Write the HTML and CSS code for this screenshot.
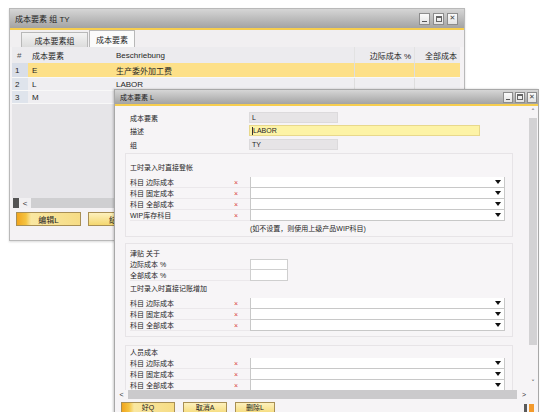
FILE: index.html
```html
<!DOCTYPE html>
<html lang="zh">
<head>
<meta charset="utf-8">
<link rel="stylesheet" href="styles.css">
</head>
<body>
<div class="desk">
  <div class="win win1">
    <div class="title t1">
      <span class="ttext">成本要素 组 TY</span>
      <div class="wbtns">
        <span class="wb"><i class="g-min"></i></span>
        <span class="wb"><i class="g-max"></i></span>
        <span class="wb"><i class="g-x">✕</i></span>
      </div>
    </div>
    <div class="tabs">
      <span class="tab">成本要素组</span>
      <span class="tab active">成本要素</span>
    </div>
    <div class="grid">
      <div class="grow head">
        <span class="c0">#</span><span class="c1">成本要素</span><span class="c2">Beschriebung</span><span class="c3">边际成本 %</span><span class="c4">全部成本</span>
      </div>
      <div class="grow r sel">
        <span class="c0">1</span><span class="c1">E</span><span class="c2">生产委外加工费</span><span class="c3"></span><span class="c4"></span>
      </div>
      <div class="grow r">
        <span class="c0">2</span><span class="c1">L</span><span class="c2">LABOR</span><span class="c3"></span><span class="c4"></span>
      </div>
      <div class="grow r">
        <span class="c0">3</span><span class="c1">M</span><span class="c2"></span><span class="c3"></span><span class="c4"></span>
      </div>
      <div class="gempty"></div>
      <div class="hs1"><span class="hthumb"></span><span class="harrow">&lt;</span><span class="htrack"></span></div>
    </div>
    <div class="btnrow1">
      <span class="btn b-edit">编辑L</span>
      <span class="btn b-2">结</span>
    </div>
  </div>

  <div class="win win2">
    <div class="title t2">
      <span class="ttext">成本要素 L</span>
      <div class="wbtns">
        <span class="wb"><i class="g-min"></i></span>
        <span class="wb"><i class="g-max"></i></span>
        <span class="wb"><i class="g-x">✕</i></span>
      </div>
    </div>
    <div class="body2">
      <div class="content">
        <div class="frow f1"><span class="flabel">成本要素</span><span class="fld gray short">L</span></div>
        <div class="frow f2"><span class="flabel">描述</span><span class="fld yellow long"><span class="caret"></span>LABOR</span></div>
        <div class="frow f3"><span class="flabel">组</span><span class="fld gray short">TY</span></div>

        <div class="sect s1">
          <div class="shead">工时录入时直接登帐</div>
          <div class="drow"><span class="dl">科目 边际成本</span><span class="x">×</span><span class="dd"></span></div>
          <div class="drow"><span class="dl">科目 固定成本</span><span class="x">×</span><span class="dd"></span></div>
          <div class="drow"><span class="dl">科目 全部成本</span><span class="x">×</span><span class="dd"></span></div>
          <div class="drow"><span class="dl">WIP库存科目</span><span class="x">×</span><span class="dd"></span></div>
          <div class="note">(如不设置，则使用上级产品WIP科目)</div>
        </div>

        <div class="sect s2">
          <div class="shead">津贴 关于</div>
          <div class="prow"><span class="dl">边际成本 %</span><span class="pin"></span></div>
          <div class="prow"><span class="dl">全部成本 %</span><span class="pin"></span></div>
          <div class="shead sh2">工时录入时直接记账增加</div>
          <div class="drow"><span class="dl">科目 边际成本</span><span class="x">×</span><span class="dd"></span></div>
          <div class="drow"><span class="dl">科目 固定成本</span><span class="x">×</span><span class="dd"></span></div>
          <div class="drow"><span class="dl">科目 全部成本</span><span class="x">×</span><span class="dd"></span></div>
        </div>

        <div class="sect s3">
          <div class="shead">人员成本</div>
          <div class="drow"><span class="dl">科目 边际成本</span><span class="x">×</span><span class="dd"></span></div>
          <div class="drow"><span class="dl">科目 固定成本</span><span class="x">×</span><span class="dd"></span></div>
          <div class="drow"><span class="dl">科目 全部成本</span><span class="x">×</span><span class="dd"></span></div>
        </div>
      </div>
      <div class="vs">
        <span class="vup">˄</span>
        <span class="vthumb"></span>
        <span class="vdown">˅</span>
      </div>
    </div>
    <div class="hs2"><span class="harrow2">&lt;</span><span class="htrack2"></span><span class="harrow2 r">&gt;</span></div>
    <div class="btnrow2">
      <span class="btn b-ok">好Q</span>
      <span class="btn b-cancel">取消A</span>
      <span class="btn b-del">删除L</span>
      <span class="grip"></span>
    </div>
  </div>
</div>
</body>
</html>
```

FILE: styles.css
```css
* { box-sizing: border-box; }
html, body { margin: 0; padding: 0; }
body {
  width: 549px; height: 412px; overflow: hidden; background: #ffffff;
  font-family: "Liberation Sans", "Noto Sans CJK SC", sans-serif;
  color: #262626;
}
.desk { position: relative; width: 549px; height: 412px; }

.win { position: absolute; background: #f4f2f4; border: 1px solid #b9b9b9; }
.win1 { left: 9px; top: 8px; width: 456px; height: 233px; box-shadow: 0 1px 2px rgba(0,0,0,0.15); font-size: 8px; }
.win2 { left: 114px; top: 89px; width: 425px; height: 330px; font-size: 7px; background: #f6f4f6; border-color: #a8a8a8; box-shadow: -1px 0 2px rgba(0,0,0,0.2); }

.title {
  display: flex; align-items: center; justify-content: space-between;
  background: linear-gradient(#d6d6d6, #a3a3a3);
  border-bottom: 2px solid #f6cd4e;
  color: #1e1e1e;
}
.t1 { height: 21px; padding: 0 6px 0 5px; font-size: 8px; }
.t2 { height: 16px; padding: 0 1px 0 5px; font-size: 7px; }
.wbtns { display: flex; gap: 2px; }
.wb {
  width: 10px; height: 11px; background: linear-gradient(#fafafa, #e3e3e3);
  border: 1px solid #8c8c8c; position: relative; display: flex; align-items: center; justify-content: center;
}
.t1 .wb { width: 11px; height: 12px; margin-left: 1px; }
.g-min { position: absolute; left: 2px; right: 2px; bottom: 2px; height: 1px; background: #555; }
.g-max { width: 6px; height: 6px; border: 1px solid #666; border-top-width: 2px; }
.g-x { font-style: normal; font-size: 7px; color: #444; line-height: 1; font-family: "DejaVu Sans", sans-serif; }

/* window 1 */
.tabs { height: 17px; display: flex; align-items: flex-end; padding-left: 11px; background: #f1eff1; }
.tab {
  height: 15px; width: 67px; display: flex; align-items: center; justify-content: center;
  background: linear-gradient(#f3f3f3, #dcdcdc); border: 1px solid #b8b8b8; border-bottom: none;
}
.tab.active { width: 46px; height: 17px; background: #fbfbfb; margin-left: 1px; }
.grid { margin: 0 4px 0 2px; background: #e6e5e8; height: 161px; display: flex; flex-direction: column; }
.grow { display: flex; height: 13px; align-items: center; }
.grow.head { height: 16px; background: #ecebee; }
.grow.r { background: #efeef1; border-bottom: 1px solid #f8f8f8; }
.grow.sel { background: #fde088; height: 15px; }
.grow span { height: 100%; display: flex; align-items: center; }
.c0 { width: 16px; padding-left: 3px; }
.r .c0 { background: #dfe4ec; }
.sel .c0 { background: #d9dee8; }
.head .c0 { color: #555; padding-left: 5px; }
.c1 { width: 85px; padding-left: 4px; }
.c2 { width: 241px; padding-left: 3px; }
.c3 { width: 60px; justify-content: flex-end; padding-right: 3px; border-left: 1px solid #dedede; }
.c4 { flex: 1; justify-content: flex-end; padding-right: 3px; border-left: 1px solid #dedede; }
.head .c3, .head .c4 { border-left-color: #e2e2e2; }
.gempty { flex: 1; }
.hs1 { height: 10px; display: flex; align-items: center; background: #f1f0f2; }
.hthumb { width: 6px; height: 10px; background: #545454; margin-left: 1px; }
.harrow { width: 12px; text-align: center; font-size: 8px; color: #333; }
.htrack { flex: 1; height: 10px; background: #cfcfd1; }
.btnrow1 { display: flex; gap: 7px; padding: 4px 0 0 6px; }
.btn {
  height: 14px; display: flex; align-items: center; justify-content: center;
  background: linear-gradient(#fdf1bd, #f4d76f); border: 1px solid #a88f54; color: #222;
}
.b-edit { width: 65px; background: linear-gradient(90deg, #f1a51e 0, #f5c441 9px, #f9e7a1 14px, #f6dc85 100%); }
.b-2 { width: 65px; justify-content: flex-start; padding-left: 20px; }

/* window 2 */
.body2 { display: flex; height: 284px; }
.content { width: 415px; height: 284px; overflow: hidden; padding-top: 6px; }
.frow { display: flex; height: 11px; align-items: center; }
.f2 { margin-top: 2px; }
.f3 { margin-top: 3px; }
.flabel { width: 134px; padding-left: 15px; }
.fld { height: 11px; display: flex; align-items: center; padding-left: 2px; }
.gray { background: #e6e4e6; border: 1px solid #dcdadc; }
.short { width: 89px; }
.yellow { background: #fdf3a6; border: 1px solid #e8d88c; }
.long { width: 231px; }
.caret { width: 1px; height: 8px; background: #333; margin-right: 0; }

.sect { margin-left: 10px; width: 388px; border: 1px solid #e7e4e7; background: #f7f5f7; padding-left: 4px; }
.s1 { margin-top: 3px; height: 84px; padding-top: 8px; }
.s2 { margin-top: 6px; height: 94px; padding-top: 4px; }
.s3 { margin-top: 8px; height: 60px; padding-top: 1px; }
.shead { height: 11px; line-height: 11px; }
.s1 .shead { margin-bottom: 4px; }
.sh2 { margin-top: 2px; margin-bottom: 3px; height: 12px; }
.drow { display: flex; height: 11px; align-items: stretch; }
.dl { width: 101px; display: flex; align-items: center; border-bottom: 1px solid #ebe8eb; }
.x { width: 19px; color: #d9443a; padding-left: 3px; display: flex; align-items: center; border-bottom: 1px solid #ebe8eb; font-size: 7px; }
.dd { width: 255px; background: #ffffff; border: 1px solid #c8c8c8; border-top: none; position: relative; }
.drow:first-of-type .dd { border-top: 1px solid #c8c8c8; }
.dd::after {
  content: ""; position: absolute; right: 3px; top: 3px;
  border-left: 3px solid transparent; border-right: 3px solid transparent; border-top: 4px solid #111;
}
.note { height: 14px; display: flex; align-items: center; padding-left: 120px; font-size: 7px; }
.prow { display: flex; height: 11px; align-items: stretch; }
.prow .dl { width: 120px; }
.pin { width: 38px; background: #fff; border: 1px solid #cfcfcf; }
.prow + .prow .pin { border-top: none; }

.vs { width: 10px; position: relative; display: flex; flex-direction: column; align-items: center; }
.vup, .vdown { font-size: 7px; line-height: 8px; height: 8px; color: #333; font-family: "DejaVu Sans", sans-serif; }
.vup { margin-top: 2px; }
.vthumb { width: 8px; height: 227px; background: #d3d2d4; margin-top: 2px; }
.vdown { margin-top: auto; margin-bottom: 3px; }

.hs2 { height: 9px; display: flex; align-items: center; }
.harrow2 { width: 13px; text-align: center; font-size: 7px; color: #333; }
.harrow2.r { width: 14px; }
.htrack2 { width: 389px; height: 9px; background: #cbcacc; }
.btnrow2 { display: flex; gap: 8px; padding: 3px 0 0 6px; position: relative; }
.btnrow2 .btn { height: 14px; align-items: flex-start; line-height: 9px; padding-top: 0; }
.b-ok { width: 54px; background: linear-gradient(90deg, #f1a51e 0, #f5c441 7px, #f9e7a1 12px, #f6dc85 100%); }
.b-cancel { width: 44px; }
.b-del { width: 40px; }
.grip { position: absolute; right: 4px; top: 5px; width: 10px; height: 8px;
  background: linear-gradient(90deg, #5a5a5a 0 3px, transparent 3px 5px, #f39a2c 5px); }
```
